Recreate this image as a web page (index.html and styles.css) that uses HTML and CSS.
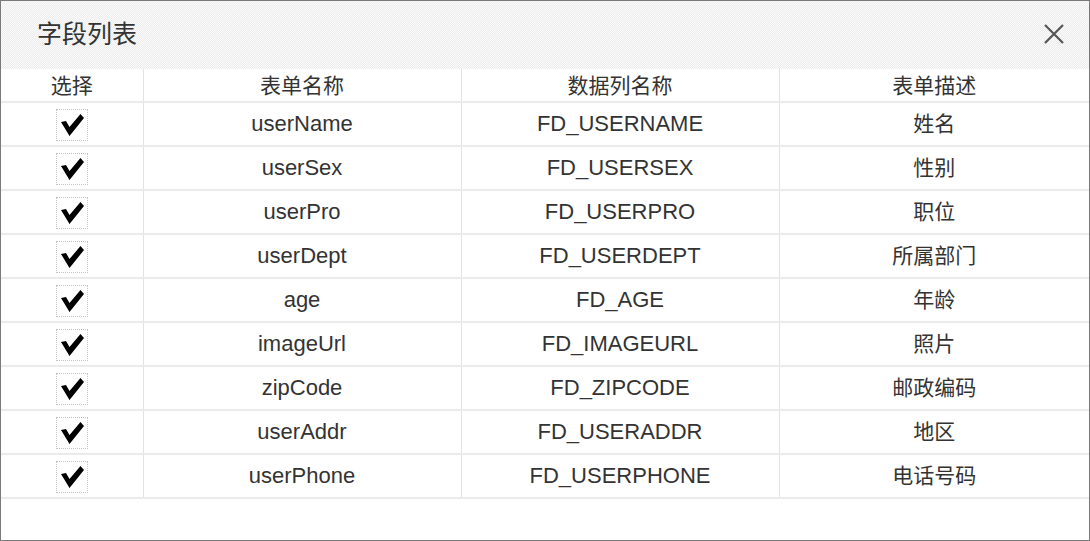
FILE: index.html
```html
<!DOCTYPE html>
<html lang="zh-CN">
<head>
  <meta charset="utf-8">
  <title>字段列表</title>
  <link rel="stylesheet" href="styles.css">
</head>
<body>

<div class="dialog">
  <div class="dialog-head">
    <h1>字段列表</h1>
    <a class="close" href="#" title="关闭">
      <svg width="22" height="22" viewBox="0 0 22 22">
        <path d="M2 2 L20 20 M20 2 L2 20" stroke="#555" stroke-width="2.2" fill="none"/>
      </svg>
    </a>
  </div>

  <table class="fields">
    <colgroup>
      <col class="c-check">
      <col class="c-name">
      <col class="c-column">
      <col class="c-desc">
    </colgroup>
    <thead>
      <tr><th>选择</th><th>表单名称</th><th>数据列名称</th><th>表单描述</th></tr>
    </thead>
    <tbody>
      <tr><td><span class="check"><svg viewBox="0 0 30 30"><path d="M4 12 L9 11 L12.5 17 L23.5 4 L27 8 L12.5 26 Z"/></svg></span></td><td>userName</td><td>FD_USERNAME</td><td class="desc">姓名</td></tr>
      <tr><td><span class="check"><svg viewBox="0 0 30 30"><path d="M4 12 L9 11 L12.5 17 L23.5 4 L27 8 L12.5 26 Z"/></svg></span></td><td>userSex</td><td>FD_USERSEX</td><td class="desc">性别</td></tr>
      <tr><td><span class="check"><svg viewBox="0 0 30 30"><path d="M4 12 L9 11 L12.5 17 L23.5 4 L27 8 L12.5 26 Z"/></svg></span></td><td>userPro</td><td>FD_USERPRO</td><td class="desc">职位</td></tr>
      <tr><td><span class="check"><svg viewBox="0 0 30 30"><path d="M4 12 L9 11 L12.5 17 L23.5 4 L27 8 L12.5 26 Z"/></svg></span></td><td>userDept</td><td>FD_USERDEPT</td><td class="desc">所属部门</td></tr>
      <tr><td><span class="check"><svg viewBox="0 0 30 30"><path d="M4 12 L9 11 L12.5 17 L23.5 4 L27 8 L12.5 26 Z"/></svg></span></td><td>age</td><td>FD_AGE</td><td class="desc">年龄</td></tr>
      <tr><td><span class="check"><svg viewBox="0 0 30 30"><path d="M4 12 L9 11 L12.5 17 L23.5 4 L27 8 L12.5 26 Z"/></svg></span></td><td>imageUrl</td><td>FD_IMAGEURL</td><td class="desc">照片</td></tr>
      <tr><td><span class="check"><svg viewBox="0 0 30 30"><path d="M4 12 L9 11 L12.5 17 L23.5 4 L27 8 L12.5 26 Z"/></svg></span></td><td>zipCode</td><td>FD_ZIPCODE</td><td class="desc">邮政编码</td></tr>
      <tr><td><span class="check"><svg viewBox="0 0 30 30"><path d="M4 12 L9 11 L12.5 17 L23.5 4 L27 8 L12.5 26 Z"/></svg></span></td><td>userAddr</td><td>FD_USERADDR</td><td class="desc">地区</td></tr>
      <tr><td><span class="check"><svg viewBox="0 0 30 30"><path d="M4 12 L9 11 L12.5 17 L23.5 4 L27 8 L12.5 26 Z"/></svg></span></td><td>userPhone</td><td>FD_USERPHONE</td><td class="desc">电话号码</td></tr>
    </tbody>
  </table>
</div>

</body>
</html>
```

FILE: styles.css
```css
html, body {
  margin: 0;
  padding: 0;
  background: white;
}

body {
  font-family: "Liberation Sans", Arial, "Noto Sans CJK SC", sans-serif;
  color: #333;
}

.dialog {
  box-sizing: border-box;
  width: 1090px;
  height: 541px;
  border: 1px solid #7a7a7a;
  background: white;
  overflow: hidden;
}

.dialog-head {
  display: flex;
  align-items: center;
  justify-content: space-between;
  height: 68px;
  padding: 0 24px 0 36px;
  background-color: #f4f4f4;
  background-image: repeating-conic-gradient(#ececec 0 25%, #fbfbfb 0 50%);
  background-size: 2px 2px;
}

.dialog-head h1 {
  margin: 0;
  font-size: 25px;
  font-weight: normal;
  color: #333;
  font-family: "Noto Sans CJK SC", sans-serif;
  line-height: 1;
  padding-bottom: 6px;
}

.close {
  display: flex;
  padding-bottom: 2px;
}

table.fields {
  width: 100%;
  border-collapse: collapse;
  table-layout: fixed;
  font-size: 22px;
}

col.c-check { width: 142px; }
col.c-name { width: 318px; }
col.c-column { width: 318px; }

table.fields th,
table.fields td {
  padding: 0;
  text-align: center;
  font-weight: normal;
  border-bottom: 2px solid #ebebeb;
  border-left: 1px solid #e2e2e2;
}

table.fields th:first-child,
table.fields td:first-child {
  border-left: none;
}

table.fields th {
  height: 33px;
  font-family: "Noto Sans CJK SC", sans-serif;
  font-size: 21px;
  line-height: 1;
  padding-bottom: 2px;
  box-sizing: border-box;
}

table.fields td {
  height: 42px;
}

table.fields td.desc {
  font-family: "Noto Sans CJK SC", sans-serif;
  font-size: 21px;
  line-height: 1;
  padding-bottom: 4px;
  box-sizing: border-box;
}

.check {
  display: inline-block;
  box-sizing: border-box;
  width: 32px;
  height: 32px;
  border: 1px dotted #c4c4c4;
  vertical-align: middle;
  margin-top: 2px;
}

.check svg {
  display: block;
  width: 30px;
  height: 30px;
  fill: black;
}
```
